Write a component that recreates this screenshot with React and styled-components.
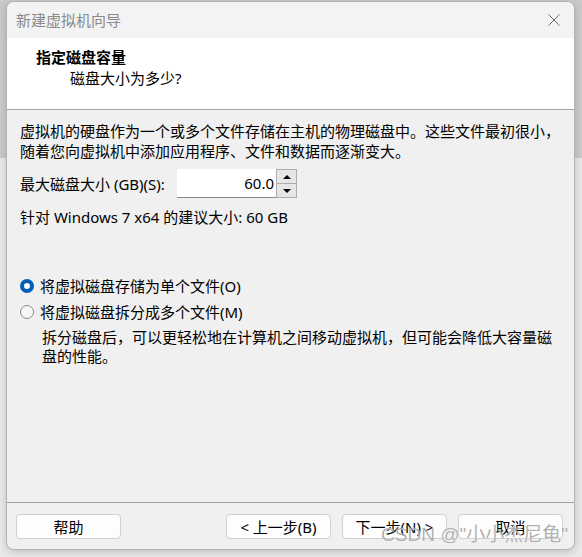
import React, { useState } from 'react'
import styled, { createGlobalStyle } from 'styled-components'

const GlobalStyle = createGlobalStyle`
  html, body {
    margin: 0;
    padding: 0;
  }
  body {
    width: 582px;
    height: 557px;
    overflow: hidden;
    background: linear-gradient(to bottom, #cbcbcb 0, #cbcbcb 158px, #e9e9e9 158px);
    font-family: "Segoe UI", "Noto Sans", "Noto Sans CJK SC", sans-serif;
    font-size: 15px;
    color: #000;
  }
`

const Window = styled.div`
  position: relative;
  margin: 1px 0 0 6px;
  width: 567px;
  height: 547px;
  border: 1px solid #b4b4b4;
  border-radius: 8px;
  overflow: hidden;
  background: #f0f0f0;
  box-shadow: 0 2px 8px rgba(0, 0, 0, 0.18);
  display: flex;
  flex-direction: column;
`

const TitleBar = styled.div`
  height: 36px;
  flex: none;
  background: #f3f3f3;
  display: flex;
  align-items: center;
  justify-content: space-between;
  padding: 0 14px 0 9px;
  color: #8a8a8a;
  line-height: 20px;
`

const CloseIcon = styled.svg`
  width: 12px;
  height: 12px;
  display: block;
`

const Header = styled.div`
  height: 72px;
  flex: none;
  background: #fff;
  padding: 9px 0 0 29px;
  box-sizing: border-box;
  border-bottom: 1px solid #a0a0a0;
`

const HeaderTitle = styled.div`
  font-weight: 700;
  line-height: 20px;
`

const HeaderSub = styled.div`
  line-height: 20px;
  margin: 1px 0 0 34px;
`

const Body = styled.div`
  flex: 1;
  padding: 11px 13px 0;
  line-height: 20px;
`

const SizeRow = styled.div`
  display: flex;
  align-items: center;
  margin-top: 8px;
  gap: 7px;
`

const SizeLabel = styled.span`
  width: 150px;
  flex: none;
`

const Spinner = styled.div`
  display: flex;
  height: 29px;
`

const SizeInput = styled.input`
  width: 99px;
  height: 29px;
  box-sizing: border-box;
  border: none;
  border-bottom: 1px solid #8a8a8a;
  background: #fff;
  text-align: right;
  font: inherit;
  padding: 0 2px 0 0;
  outline: none;
`

const SpinButtons = styled.div`
  display: flex;
  flex-direction: column;
  width: 21px;
  height: 29px;
`

const SpinButton = styled.div`
  flex: 1;
  border: 1px solid #adadad;
  background: #e6e6e6;
  display: flex;
  align-items: center;
  justify-content: center;
  & + & {
    border-top: none;
  }
`

const Arrow = styled.div`
  width: 0;
  height: 0;
  border-left: 4px solid transparent;
  border-right: 4px solid transparent;
  ${p => (p.$up ? 'border-bottom: 4px solid #000;' : 'border-top: 4px solid #000;')}
`

const Recommend = styled.div`
  margin-top: 9px;
`

const RadioGroup = styled.div`
  margin-top: 49px;
  display: flex;
  flex-direction: column;
  gap: 6px;
`

const RadioRow = styled.label`
  display: flex;
  align-items: center;
  gap: 6px;
  cursor: default;
`

const RadioDot = styled.span`
  width: 14px;
  height: 14px;
  box-sizing: border-box;
  border-radius: 50%;
  flex: none;
  background: ${p => (p.$checked ? '#fff' : '#f6f6f6')};
  border: ${p => (p.$checked ? '4px solid #005fb8' : '1px solid #8a8a8a')};
`

const Note = styled.div`
  margin: 6px 0 0 22px;
  line-height: 19px;
`

const Footer = styled.div`
  flex: none;
  height: 47px;
  box-sizing: border-box;
  border-top: 1px solid #a0a0a0;
  display: flex;
  align-items: flex-start;
  justify-content: space-between;
  padding: 11px 11px 0 9px;
`

const ButtonGroup = styled.div`
  display: flex;
  gap: 11px;
`

const Button = styled.button`
  width: 105px;
  height: 25px;
  box-sizing: border-box;
  border: 1px solid #d0d0d0;
  border-radius: 4px;
  background: #fdfdfd;
  font: inherit;
  line-height: 20px;
  color: #000;
  padding: 0;
`

const Watermark = styled.div`
  position: absolute;
  right: 6px;
  bottom: 2px;
  font-size: 19px;
  line-height: 24px;
  color: rgba(110, 110, 110, 0.55);
  text-shadow: 0 0 1px #fff;
  pointer-events: none;
  white-space: nowrap;
  font-family: "Liberation Sans", "Noto Sans CJK SC", sans-serif;
`

const App = () => {
  const [split, setSplit] = useState(false)
  const [size, setSize] = useState('60.0')

  return (
    <>
      <GlobalStyle />
      <Window>
        <TitleBar>
          <span>新建虚拟机向导</span>
          <CloseIcon viewBox="0 0 12 12">
            <path d="M0.5 0.5L11.5 11.5M11.5 0.5L0.5 11.5" stroke="#6a6a6a" strokeWidth="1" fill="none" />
          </CloseIcon>
        </TitleBar>
        <Header>
          <HeaderTitle>指定磁盘容量</HeaderTitle>
          <HeaderSub>磁盘大小为多少?</HeaderSub>
        </Header>
        <Body>
          <div>
            虚拟机的硬盘作为一个或多个文件存储在主机的物理磁盘中。这些文件最初很小，随着您向虚拟机中添加应用程序、文件和数据而逐渐变大。
          </div>
          <SizeRow>
            <SizeLabel>最大磁盘大小 (GB)(S):</SizeLabel>
            <Spinner>
              <SizeInput value={size} onChange={e => setSize(e.target.value)} />
              <SpinButtons>
                <SpinButton><Arrow $up /></SpinButton>
                <SpinButton><Arrow /></SpinButton>
              </SpinButtons>
            </Spinner>
          </SizeRow>
          <Recommend>针对 Windows 7 x64 的建议大小: 60 GB</Recommend>
          <RadioGroup>
            <RadioRow onClick={() => setSplit(false)}>
              <RadioDot $checked={!split} />
              将虚拟磁盘存储为单个文件(O)
            </RadioRow>
            <RadioRow onClick={() => setSplit(true)}>
              <RadioDot $checked={split} />
              将虚拟磁盘拆分成多个文件(M)
            </RadioRow>
          </RadioGroup>
          <Note>拆分磁盘后，可以更轻松地在计算机之间移动虚拟机，但可能会降低大容量磁盘的性能。</Note>
        </Body>
        <Footer>
          <Button>帮助</Button>
          <ButtonGroup>
            <Button>&lt; 上一步(B)</Button>
            <Button>下一步(N) &gt;</Button>
            <Button>取消</Button>
          </ButtonGroup>
        </Footer>
        <Watermark>CSDN @"小小杰尼龟"</Watermark>
      </Window>
    </>
  )
}

export default App
